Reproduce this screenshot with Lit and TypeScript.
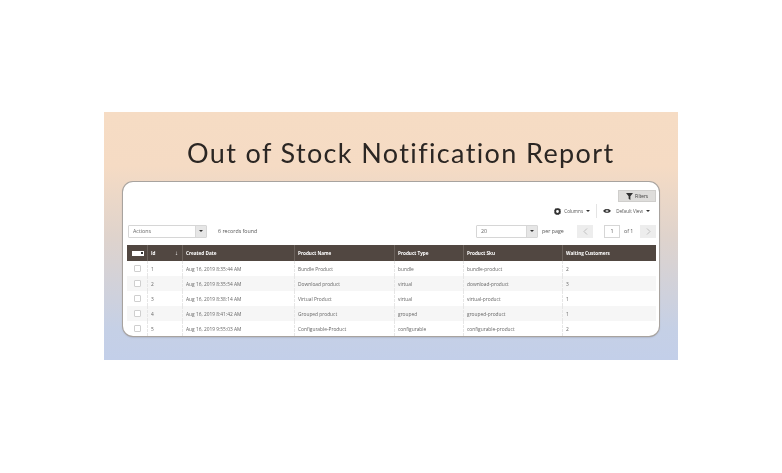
import { LitElement, html, css, svg } from 'lit';
import { customElement } from 'lit/decorators.js';

const columns = [
  { label: 'Id', width: 35 },
  { label: 'Created Date', width: 112 },
  { label: 'Product Name', width: 100 },
  { label: 'Product Type', width: 69 },
  { label: 'Product Sku', width: 99 },
  { label: 'Waiting Customers', width: 94 },
];

const rows = [
  ['1', 'Aug 16, 2019 8:35:44 AM', 'Bundle Product', 'bundle', 'bundle-product', '2'],
  ['2', 'Aug 16, 2019 8:35:54 AM', 'Download product', 'virtual', 'download-product', '3'],
  ['3', 'Aug 16, 2019 8:38:14 AM', 'Virtual Product', 'virtual', 'virtual-product', '1'],
  ['4', 'Aug 16, 2019 8:41:42 AM', 'Grouped product', 'grouped', 'grouped-product', '1'],
  ['5', 'Aug 16, 2019 9:55:03 AM', 'Configurable-Product', 'configurable', 'configurable-product', '2'],
];

const funnel = svg`<path d="M0 0h8L5 3.6V8L3 6.6V3.6z" fill="#303030"/>`;
const gear = svg`<circle cx="4" cy="4" r="2.6" fill="none" stroke="#303030" stroke-width="2"/><circle cx="4" cy="4" r="3.9" fill="none" stroke="#303030" stroke-width=".8" stroke-dasharray="1.2 .9"/>`;
const eye = svg`<path d="M0 3.5C2 .5 7 .5 9 3.5 7 6.5 2 6.5 0 3.5z" fill="#303030"/><circle cx="4.5" cy="3.5" r="1.6" fill="#fff"/><circle cx="4.5" cy="3.5" r=".8" fill="#303030"/>`;
const chevronLeft = svg`<path d="M4 .5 1 3.5l3 3" fill="none" stroke="#b4b4b4" stroke-width=".8"/>`;
const chevronRight = svg`<path d="M1 .5l3 3-3 3" fill="none" stroke="#b4b4b4" stroke-width=".8"/>`;

@customElement('app-root')
export class AppRoot extends LitElement {
  static styles = css`
    :host {
      display: block;
      height: 473px;
      background: #fff;
      font-family: 'Open Sans', sans-serif;
      padding-top: 112px;
      box-sizing: border-box;
    }
    .banner {
      width: 574px;
      height: 248px;
      margin-left: 104px;
      box-sizing: border-box;
      padding: 24px 19px 0;
      background: linear-gradient(180deg, #f6dcc4 0%, #f5dbc4 22%, #dfd3cc 50%, #c5d0e6 88%, #c3cfe9 100%);
      filter: blur(0.4px);
    }
    h1 {
      margin: 0 0 12px;
      height: 34px;
      font: 400 27px/34px 'Lato', sans-serif;
      letter-spacing: 1.37px;
      color: #2b2623;
      padding-left: 64px;
      white-space: nowrap;
    }
    .card {
      height: 154px;
      box-sizing: border-box;
      background: #fff;
      border-radius: 10px;
      box-shadow: 0 0 0 1px #a8a39f, 0 1px 2px rgba(70, 60, 50, 0.45);
      padding: 8px 3px 0 4px;
    }
    .row {
      display: flex;
      justify-content: flex-end;
      align-items: center;
    }
    .filters {
      width: 38px;
      height: 12px;
      box-sizing: border-box;
      background: #dedddb;
      border: 1px solid #cfcecc;
      display: flex;
      align-items: center;
      justify-content: center;
      gap: 2px;
      font-size: 4.6px;
      color: #333;
    }
    .views {
      height: 14px;
      margin-top: 2px;
      font-size: 4.6px;
      color: #555;
    }
    .view {
      display: flex;
      align-items: center;
      gap: 3px;
      white-space: nowrap;
    }
    .view:first-child {
      padding-right: 6px;
      border-right: 1px solid #e4e4e4;
      margin-right: 6px;
      height: 14px;
    }
    .view:last-child {
      margin-right: 6px;
    }
    .view:last-child svg {
      margin-right: 2px;
    }
    .caret {
      width: 0;
      height: 0;
      border: 2px solid transparent;
      border-top: 2.5px solid #333;
      border-bottom: 0;
    }
    .bar {
      display: flex;
      align-items: center;
      height: 14px;
      margin-top: 6px;
      margin-left: 1px;
      font-size: 5.3px;
      color: #555;
      white-space: nowrap;
    }
    .select {
      display: flex;
      height: 13px;
      box-sizing: border-box;
      border: 1px solid #d6d6d6;
      border-radius: 1px;
      align-items: center;
      padding-left: 4px;
      font-size: 5.3px;
      color: #666;
    }
    .select span {
      flex: 1;
    }
    .select i {
      width: 10px;
      height: 11px;
      background: #e6e6e6;
      border-left: 1px solid #d8d8d8;
      display: flex;
      align-items: center;
      justify-content: center;
    }
    .actions {
      width: 79px;
    }
    .found {
      margin-left: 11px;
      flex: 1;
    }
    .size {
      width: 62px;
    }
    .per {
      margin-left: 4px;
      width: 22px;
      margin-right: 13px;
    }
    .pager {
      width: 16px;
      height: 13px;
      background: #ededed;
      display: flex;
      align-items: center;
      justify-content: center;
    }
    .page {
      width: 16px;
      height: 13px;
      box-sizing: border-box;
      border: 1px solid #d6d6d6;
      margin-left: 11px;
      display: flex;
      align-items: center;
      justify-content: center;
    }
    .of {
      margin: 0 7px 0 4px;
      width: 9px;
    }
    .grid {
      display: grid;
      grid-template-columns: 20px 35px 112px 100px 69px 99px 94px;
      margin-top: 7px;
      width: 529px;
    }
    .head {
      height: 16px;
      background: #514741;
      color: #fff;
      font-size: 4.65px;
      font-weight: 700;
      display: flex;
      align-items: center;
      padding-left: 3px;
      border-left: 1px solid #6b625c;
      box-sizing: border-box;
      justify-content: space-between;
    }
    .head.first {
      border-left: 0;
      padding-left: 5px;
      justify-content: flex-start;
    }
    .all {
      width: 12px;
      height: 5px;
      background: #fff;
      display: flex;
      align-items: center;
      justify-content: flex-end;
      padding-right: 1px;
      box-sizing: border-box;
    }
    .all::after {
      content: '';
      width: 2px;
      height: 2px;
      background: #333;
    }
    .arrow {
      margin-right: 4px;
      font-size: 6px;
    }
    .cell {
      height: 15px;
      box-sizing: border-box;
      display: flex;
      align-items: center;
      padding-left: 3px;
      font-size: 4.85px;
      color: #666;
      border-left: 1px dashed #e6e6e6;
      white-space: nowrap;
    }
    .cell.box {
      border-left: 0;
      padding-left: 7px;
    }
    .cell.alt {
      background: #f6f6f6;
    }
    .box b {
      width: 7px;
      height: 7px;
      box-sizing: border-box;
      display: block;
      border: 1px solid #cfcfcf;
      border-radius: 1px;
      background: #fff;
    }
  `;

  private caret() {
    return html`<div class="caret"></div>`;
  }

  render() {
    return html`
      <div class="banner">
        <h1>Out of Stock Notification Report</h1>
        <div class="card">
          <div class="row">
            <div class="filters">
              <svg width="7" height="7" viewBox="0 0 8 8">${funnel}</svg>Filters
            </div>
          </div>
          <div class="row views">
            <div class="view">
              <svg width="7" height="7" viewBox="0 0 8 8">${gear}</svg>Columns ${this.caret()}
            </div>
            <div class="view">
              <svg width="8" height="6" viewBox="0 0 9 7">${eye}</svg>Default View ${this.caret()}
            </div>
          </div>
          <div class="bar">
            <div class="select actions"><span>Actions</span><i>${this.caret()}</i></div>
            <div class="found">6 records found</div>
            <div class="select size"><span>20</span><i>${this.caret()}</i></div>
            <div class="per">per page</div>
            <div class="pager"><svg width="5" height="7" viewBox="0 0 5 7">${chevronLeft}</svg></div>
            <div class="page">1</div>
            <div class="of">of 1</div>
            <div class="pager"><svg width="5" height="7" viewBox="0 0 5 7">${chevronRight}</svg></div>
          </div>
          <div class="grid">
            <div class="head first"><div class="all"></div></div>
            ${columns.map(
              (c, i) => html`<div class="head">
                <span>${c.label}</span>${i === 0 ? html`<span class="arrow">↓</span>` : ''}
              </div>`,
            )}
            ${rows.map(
              (r, i) => html`
                <div class="cell box ${i % 2 ? 'alt' : ''}"><b></b></div>
                ${r.map((v) => html`<div class="cell ${i % 2 ? 'alt' : ''}">${v}</div>`)}
              `,
            )}
          </div>
        </div>
      </div>
    `;
  }
}
